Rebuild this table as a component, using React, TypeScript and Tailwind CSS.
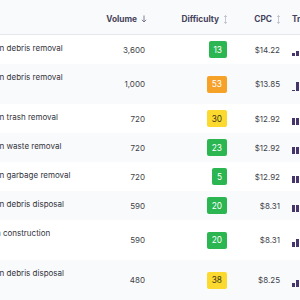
type Row = {
  keyword: string;
  volume: string;
  kd: number;
  cpc: string;
  trend: number[];
};

const rows: Row[] = [
  { keyword: "construction debris removal", volume: "3,600", kd: 13, cpc: "$14.22", trend: [3, 5, 7, 9] },
  { keyword: "construction debris removal services", volume: "1,000", kd: 53, cpc: "$13.85", trend: [1, 9, 11] },
  { keyword: "construction trash removal", volume: "720", kd: 30, cpc: "$12.92", trend: [7, 7, 9] },
  { keyword: "construction waste removal", volume: "720", kd: 23, cpc: "$12.92", trend: [7, 7, 9] },
  { keyword: "construction garbage removal", volume: "720", kd: 5, cpc: "$12.92", trend: [7, 7, 9] },
  { keyword: "construction debris disposal", volume: "590", kd: 20, cpc: "$8.31", trend: [7, 7, 9] },
  { keyword: "debris from construction projects", volume: "590", kd: 20, cpc: "$8.31", trend: [5, 8, 10] },
  { keyword: "construction debris disposal services", volume: "480", kd: 38, cpc: "$8.25", trend: [4, 7, 10] },
];

const badgeClass = (kd: number) => {
  if (kd >= 50) return "bg-[#f6a229] text-white";
  if (kd >= 30) return "bg-[#fcd92e] text-[#3d3a1c]";
  return "bg-[#2cb652] text-white";
};

const SortDown = () => (
  <svg width="6" height="8" viewBox="0 0 6 8" className="inline-block ml-[4px] mb-[1px]">
    <path d="M3 0.5V7M0.8 4.8L3 7L5.2 4.8" stroke="#6f6d86" strokeWidth="0.9" fill="none" />
  </svg>
);

const SortBoth = () => (
  <svg width="5" height="9" viewBox="0 0 5 9" className="inline-block ml-[4px] mb-[1px]">
    <path d="M2.5 0.5V8.5M1 2L2.5 0.5L4 2M1 7L2.5 8.5L4 7" stroke="#b9b8c8" strokeWidth="0.8" fill="none" />
  </svg>
);

const Trend = ({ values }: { values: number[] }) => (
  <div className="flex items-end gap-[1px] h-[13px]">
    {values.map((v, i) => (
      <div key={i} className="w-[3px] bg-[#46356b]" style={{ height: `${v}px` }} />
    ))}
  </div>
);

export default function App() {
  return (
    <div className="w-[300px] h-[300px] overflow-hidden bg-white font-[Inter,sans-serif] text-[8px] leading-[14px]">
      <table className="-ml-[51px] w-[391px] table-fixed border-collapse">
        <colgroup>
          <col className="w-[134px]" />
          <col className="w-[69px]" />
          <col className="w-[82px]" />
          <col className="w-[53px]" />
          <col className="w-[53px]" />
        </colgroup>
        <thead>
          <tr className="bg-[#f9fafb] border-b border-[#e6e6ec] text-[#44425a] font-semibold text-[8.3px]">
            <th className="pt-[12px] pb-[8px] pl-[8px] pr-[8px] text-left">Keyword</th>
            <th className="pt-[12px] pb-[8px] pr-[5px] text-right whitespace-nowrap">
              Volume
              <SortDown />
            </th>
            <th className="pt-[12px] pb-[8px] pr-[6px] text-right whitespace-nowrap">
              Difficulty
              <SortBoth />
            </th>
            <th className="pt-[12px] pb-[8px] pr-[6px] text-right whitespace-nowrap">
              CPC
              <SortBoth />
            </th>
            <th className="pt-[12px] pb-[8px] pl-[5px] text-left whitespace-nowrap">Trend</th>
          </tr>
        </thead>
        <tbody>
          {rows.map((row, i) => (
            <tr key={i} className={i % 2 === 0 ? "bg-white" : "bg-[#f9fafb]"}>
              <td className="py-[6px] pl-[8px] pr-[8px] align-top text-[#33333c]">{row.keyword}</td>
              <td className="py-[6px] pr-[7px] text-right align-middle text-[#3f3f48]">{row.volume}</td>
              <td className="py-[6px] pr-[7px] text-right align-middle">
                <span
                  className={`inline-flex items-center justify-center h-[17px] min-w-[15px] px-[5px] rounded-[2px] text-[8.3px] ${badgeClass(row.kd)}`}
                >
                  {row.kd}
                </span>
              </td>
              <td className="py-[6px] pr-[7px] text-right align-middle text-[#3f3f48]">{row.cpc}</td>
              <td className="py-[6px] pl-[5px] align-middle">
                <Trend values={row.trend} />
              </td>
            </tr>
          ))}
        </tbody>
      </table>
    </div>
  );
}
